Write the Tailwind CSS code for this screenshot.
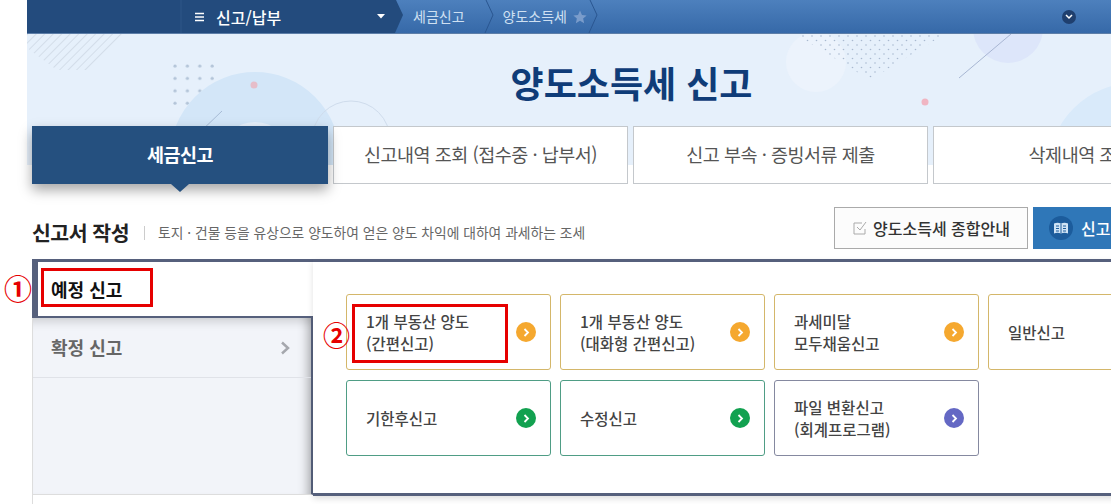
<!DOCTYPE html>
<html lang="ko">
<head>
  <meta charset="UTF-8" />
  <title>양도소득세 신고</title>
  <script src="https://cdn.jsdelivr.net/npm/@tailwindcss/browser@4"></script>
</head>
<body class="bg-white overflow-hidden h-[504px] w-[1111px] font-['Noto_Sans_CJK_KR','Noto_Sans',sans-serif] text-[#333]">
  <div class="ml-[27px] w-[1209px]">
    <!-- Top bar -->
    <div class="relative h-[34px] flex items-center bg-gradient-to-b from-[#4d80bd] to-[#3669a8] border-b border-[#5d7ea8]">
      <svg class="absolute left-0 top-0" width="600" height="33" viewBox="0 0 600 33">
        <polygon points="0,0 369,0 376,15 368,33 0,33" fill="#234b7d" />
        <line x1="154" y1="0" x2="154" y2="33" stroke="#2e5688" />
        <polyline points="459,0 466,15 458,33" fill="none" stroke="#2a5690" />
        <polyline points="563,0 570,15 562,33" fill="none" stroke="#2a5690" />
      </svg>
      <div class="relative flex items-center h-full text-[16px] font-medium text-white">
        <svg class="ml-[168px]" width="10" height="10" viewBox="0 0 10 10"><path d="M0 1.500h9M0 5h9M0 8.500h9" stroke="#fff" stroke-width="1.500" /></svg>
        <span class="ml-[11px] w-[154px]">신고/납부</span>
        <svg width="8" height="5" viewBox="0 0 8 5" class="ml-[7px]"><path d="M0 0h8L4 4.500z" fill="#fff" /></svg>
      </div>
      <span class="relative ml-[28px] text-[14px] text-[#cfe0f2]">세금신고</span>
      <span class="relative ml-[38px] text-[14px] text-[#cfe0f2]">양도소득세</span>
      <svg class="relative ml-[6px]" width="14" height="14" viewBox="0 0 24 24"><path d="M12 1l3.400 7.400 8 .9-6 5.400 1.700 7.900L12 18.600l-7.100 4 1.700-7.900-6-5.400 8-.9z" fill="#7a9ccb" /></svg>
      <span class="relative ml-[475px] w-[14px] h-[14px] rounded-full bg-[#1f3f6e] flex items-center justify-center">
        <svg width="8" height="6" viewBox="0 0 8 6"><path d="M1 1l3 3 3-3" fill="none" stroke="#fff" stroke-width="1.500" /></svg>
      </span>
    </div>

    <!-- Hero -->
    <div class="relative h-[131px] bg-[#e6f0fb] overflow-hidden">
      <svg class="absolute left-0 top-0" width="1209" height="131" viewBox="0 0 1209 131">
        <defs>
          <pattern id="halftone" width="9" height="9" patternUnits="userSpaceOnUse">
            <circle cx="2" cy="2" r="0.8" fill="#a9b9cf" />
            <circle cx="6.500" cy="6.500" r="0.8" fill="#a9b9cf" />
          </pattern>
          <pattern id="stripes" width="6" height="6" patternUnits="userSpaceOnUse" patternTransform="rotate(45)">
            <rect width="1" height="6" fill="#d3dde9" />
          </pattern>
          <pattern id="dots4" x="145" y="29" width="12.400" height="12.400" patternUnits="userSpaceOnUse">
            <circle cx="3" cy="3" r="1.600" fill="#b3c4d8" />
          </pattern>
        </defs>
        <polygon points="0,0 98,0 65,36 30,36 0,14" fill="url(#stripes)" />
        <rect x="145" y="29" width="42" height="45" fill="url(#dots4)" />
        <circle cx="228" cy="123" r="60" fill="none" stroke="#d3e6f8" stroke-width="50" />
        <circle cx="227" cy="51" r="3.500" fill="#e6bdc9" />
        <circle cx="324" cy="106" r="39" fill="none" stroke="#cfdcec" />
        <line x1="195" y1="77" x2="170" y2="101" stroke="#a8bcd6" />
        <circle cx="789" cy="28" r="30" fill="#ecf3fc" />
        <path d="M768 0h150L843 46z" fill="url(#halftone)" />
        <circle cx="981" cy="-6" r="35" fill="#dde6fa" />
        <line x1="984" y1="0" x2="932" y2="44" stroke="#a8b6d2" />
        <circle cx="898" cy="68" r="3.500" fill="#f0b5c2" />
        <circle cx="1108" cy="136" r="68" fill="none" stroke="#d9eafa" stroke-width="38" />
      </svg>
      <h1 class="relative pt-[24px] text-center text-[36px] leading-[48px] font-bold text-[#0f3c78]">양도소득세 신고</h1>
    </div>

    <!-- Tabs -->
    <div class="relative mt-[-39px] ml-[5px] flex gap-[5px] text-[18.500px] tracking-[-0.5px] text-[#555]">
      <div class="relative w-[296px] h-[58px] flex items-center justify-center bg-[#25507f] text-white font-bold shadow-[0_6px_12px_rgba(0,0,0,0.35)]">
        세금신고
        <span class="absolute left-[139px] top-[58px] border-x-[9px] border-x-transparent border-t-[8px] border-t-[#25507f]"></span>
      </div>
      <div class="w-[295px] h-[58px] flex items-center justify-center bg-white border border-[#c4c8cc]">신고내역 조회 (접수중 · 납부서)</div>
      <div class="w-[295px] h-[58px] flex items-center justify-center bg-white border border-[#c4c8cc]">신고 부속 · 증빙서류 제출</div>
      <div class="w-[295px] h-[58px] flex items-center justify-center bg-white border border-[#c4c8cc]">삭제내역 조회</div>
    </div>

    <!-- Section header -->
    <div class="ml-[5px] mt-[23px] h-[42px] flex items-center">
      <h2 class="text-[20.500px] font-bold text-[#222] tracking-[-0.5px] pt-[8px]">신고서 작성</h2>
      <span class="ml-[15px] mt-[10px] h-[14px] border-l border-[#ccc]"></span>
      <p class="ml-[13px] pt-[8px] text-[13.800px] text-[#666]">토지 · 건물 등을 유상으로 양도하여 얻은 양도 차익에 대하여 과세하는 조세</p>
      <button class="ml-auto w-[194px] h-[42px] flex items-center justify-center gap-[5px] bg-[#fcfcfc] border border-[#aaa] text-[16px] font-medium">
        <svg width="16" height="16" viewBox="0 0 16 16"><path d="M13 9v5H2V3h8" fill="none" stroke="#aaa" /><path d="M5 7l3 3 6-8" fill="none" stroke="#aaa" /></svg>
        양도소득세 종합안내
      </button>
      <button class="ml-[5px] w-[203px] h-[42px] flex items-center pl-[16px] gap-[8px] bg-[#2f77b8] text-white text-[16px] font-medium">
        <span class="w-[24px] h-[24px] rounded-full bg-[#1c5c9c] flex items-center justify-center">
          <svg width="16" height="13" viewBox="0 0 16 13"><path d="M1 1.500c2.300-1 4.700-1 7 0c2.300-1 4.700-1 7 0v10c-2.300-1-4.700-1-7 0c-2.300-1-4.700-1-7 0z" fill="#cfe3f5" /><path d="M8 1.500v10M3 4h3M3 6.500h3M3 9h3M10 4h3M10 6.500h3M10 9h3" stroke="#1c5c9c" /></svg>
        </span>
        신고도움자료
      </button>
    </div>

    <!-- Panel -->
    <div class="relative mt-[10px] ml-[5px] flex">
      <div class="w-[281px] shrink-0">
        <div class="h-[59px] pl-[13px] flex items-center bg-white border-l-[6px] border-t-[3px] border-b-2 border-[#56607c] text-[18px] font-bold text-[#111]">예정 신고</div>
        <div class="h-[177px] border-l border-r-2 border-l-[#ddd] border-r-[#56607c] bg-[#f2f4f9] shadow-[inset_-12px_0_10px_-8px_rgba(0,0,0,0.25),inset_0_12px_10px_-8px_rgba(0,0,0,0.15)] border-b border-b-[#ddd]">
          <div class="h-[60px] flex items-center justify-between pl-[18px] pr-[21px] border-b border-[#e0e2e8] text-[18px] font-bold text-[#666]">
            확정 신고
            <svg width="10" height="14" viewBox="0 0 10 14"><path d="M2 1.500l6 5.500-6 5.500" fill="none" stroke="#a5a7ad" stroke-width="2.500" /></svg>
          </div>
        </div>
        <div class="h-[9px] border-l border-[#ddd]"></div>
      </div>
      <div class="flex-1 h-[237px] border-t-[3px] border-b-[3px] border-[#56607c] pl-[33px] pt-[32px] shadow-[0_3px_6px_rgba(0,0,0,0.12)] overflow-hidden">
        <div class="grid grid-cols-[205px_205px_205px_205px] grid-rows-[76px_76px] gap-[10px_9px] text-[15.500px] leading-[22px] font-medium text-[#444]">
          <div class="flex items-center justify-between pl-[19px] pr-[14px] border border-[#d4b76a] rounded-[3px]">
            <div>1개 부동산 양도<br />(간편신고)</div>
            <span class="w-[20px] h-[20px] rounded-full bg-[#f5a82f] flex items-center justify-center"><svg width="7" height="9" viewBox="0 0 7 9"><path d="M1.500 1l3.500 3.500L1.500 8" fill="none" stroke="#fff" stroke-width="1.800" /></svg></span>
          </div>
          <div class="flex items-center justify-between pl-[19px] pr-[14px] border border-[#d4b76a] rounded-[3px]">
            <div>1개 부동산 양도<br />(대화형 간편신고)</div>
            <span class="w-[20px] h-[20px] rounded-full bg-[#f5a82f] flex items-center justify-center"><svg width="7" height="9" viewBox="0 0 7 9"><path d="M1.500 1l3.500 3.500L1.500 8" fill="none" stroke="#fff" stroke-width="1.800" /></svg></span>
          </div>
          <div class="flex items-center justify-between pl-[19px] pr-[14px] border border-[#d4b76a] rounded-[3px]">
            <div>과세미달<br />모두채움신고</div>
            <span class="w-[20px] h-[20px] rounded-full bg-[#f5a82f] flex items-center justify-center"><svg width="7" height="9" viewBox="0 0 7 9"><path d="M1.500 1l3.500 3.500L1.500 8" fill="none" stroke="#fff" stroke-width="1.800" /></svg></span>
          </div>
          <div class="flex items-center pl-[19px] border border-[#d4b76a] rounded-[3px]">일반신고</div>
          <div class="flex items-center justify-between pl-[19px] pr-[14px] border border-[#4f9d85] rounded-[3px]">
            <div>기한후신고</div>
            <span class="w-[20px] h-[20px] rounded-full bg-[#12a150] flex items-center justify-center"><svg width="7" height="9" viewBox="0 0 7 9"><path d="M1.500 1l3.500 3.500L1.500 8" fill="none" stroke="#fff" stroke-width="1.800" /></svg></span>
          </div>
          <div class="flex items-center justify-between pl-[19px] pr-[14px] border border-[#4f9d85] rounded-[3px]">
            <div>수정신고</div>
            <span class="w-[20px] h-[20px] rounded-full bg-[#12a150] flex items-center justify-center"><svg width="7" height="9" viewBox="0 0 7 9"><path d="M1.500 1l3.500 3.500L1.500 8" fill="none" stroke="#fff" stroke-width="1.800" /></svg></span>
          </div>
          <div class="flex items-center justify-between pl-[19px] pr-[14px] border border-[#8589a0] rounded-[3px]">
            <div>파일 변환신고<br />(회계프로그램)</div>
            <span class="w-[20px] h-[20px] rounded-full bg-[#6468c4] flex items-center justify-center"><svg width="7" height="9" viewBox="0 0 7 9"><path d="M1.500 1l3.500 3.500L1.500 8" fill="none" stroke="#fff" stroke-width="1.800" /></svg></span>
          </div>
        </div>
      </div>

      <!-- Red annotation boxes over the panel -->
      <div class="absolute left-[9px] top-[9px] w-[112px] h-[39px] border-[3px] border-[#e60000]"></div>
      <div class="absolute left-[320px] top-[45px] w-[156px] h-[59px] border-[3px] border-[#e60000]"></div>
      <span class="absolute left-[-28px] top-[8px] text-[28px] leading-[42px] font-bold text-[#e60000]">①</span>
      <span class="absolute left-[291px] top-[55px] text-[27px] leading-[42px] font-bold text-[#e60000]">②</span>
    </div>
  </div>
</body>
</html>
